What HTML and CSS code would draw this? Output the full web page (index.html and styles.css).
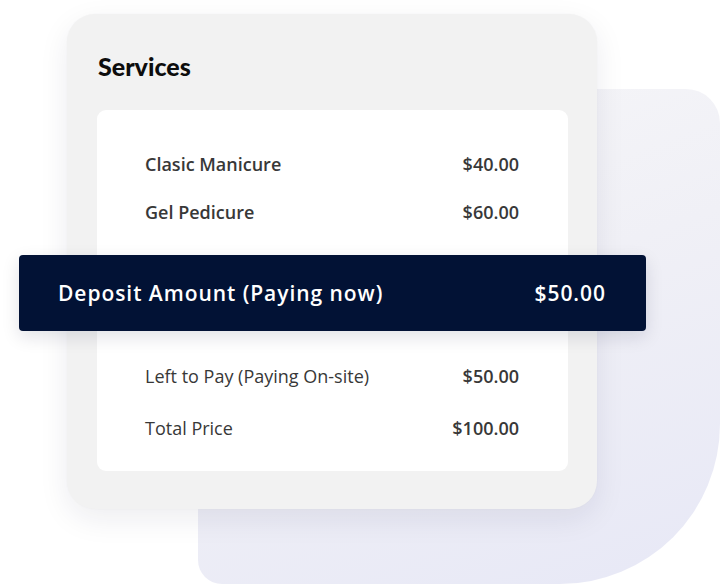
FILE: index.html
```html
<!DOCTYPE html>
<html lang="en">
<head>
<meta charset="utf-8">
<title>Services</title>
<link rel="stylesheet" href="styles.css">
</head>
<body>
<div class="stage">
  <div class="blob"></div>
  <section class="card">
    <h2 class="title">Services</h2>
    <div class="panel">
      <div class="row row-item"><span>Clasic Manicure</span><span>$40.00</span></div>
      <div class="row row-item"><span>Gel Pedicure</span><span>$60.00</span></div>
      <div class="deposit"><span>Deposit Amount (Paying now)</span><span>$50.00</span></div>
      <div class="row row-sum"><span>Left to Pay (Paying On-site)</span><span class="amt">$50.00</span></div>
      <div class="row row-sum"><span>Total Price</span><span class="amt">$100.00</span></div>
    </div>
  </section>
</div>
</body>
</html>
```
FILE: styles.css
```css
* { box-sizing: border-box; }
html, body { margin: 0; padding: 0; background: #ffffff; }
body { font-family: "Open Sans", "Noto Sans", sans-serif; }

.stage {
  position: relative;
  width: 720px;
  height: 584px;
  overflow: hidden;
  padding: 14px 0 0 67px;
}

.blob {
  position: absolute;
  left: 198px;
  top: 89px;
  width: 522px;
  height: 495px;
  border-radius: 0 34px 160px 24px;
  background: linear-gradient(160deg, #f7f7f9 0%, #f0f0f6 45%, #e7e8f6 100%);
  z-index: 0;
}

.card {
  position: relative;
  z-index: 1;
  width: 530px;
  height: 495px;
  background: #f2f2f2;
  border-radius: 28px;
  box-shadow: 0 10px 30px rgba(20, 20, 60, 0.08), 0 0 2px rgba(0,0,0,0.03);
  padding: 0 29px 0 30px;
  display: flex;
  flex-direction: column;
}

.title {
  margin: 0;
  height: 96px;
  padding: 37px 0 0 1px;
  font-family: "Lato", sans-serif;
  font-weight: 900;
  font-size: 25px;
  line-height: 30px;
  color: #0d0d0d;
}

.panel {
  background: #ffffff;
  border-radius: 9px;
  height: 361px;
  padding: 30px 49px 0 48px;
  display: flex;
  flex-direction: column;
}

.row {
  display: flex;
  justify-content: space-between;
  align-items: center;
  color: #383838;
  font-size: 18px;
}

.row-item {
  height: 48px;
  font-weight: 600;
}

.row-sum {
  height: 52px;
  font-weight: 400;
}

.row-sum .amt { font-weight: 600; }

.deposit {
  margin: 19px -127px 19px -126px;
  height: 76px;
  background: #021235;
  border-radius: 4px;
  box-shadow: 0 6px 18px rgba(2, 18, 53, 0.12);
  display: flex;
  justify-content: space-between;
  align-items: center;
  padding: 0 40px 0 39px;
  color: #ffffff;
  font-size: 21px;
  font-weight: 600;
  letter-spacing: 0.95px;
}
```
